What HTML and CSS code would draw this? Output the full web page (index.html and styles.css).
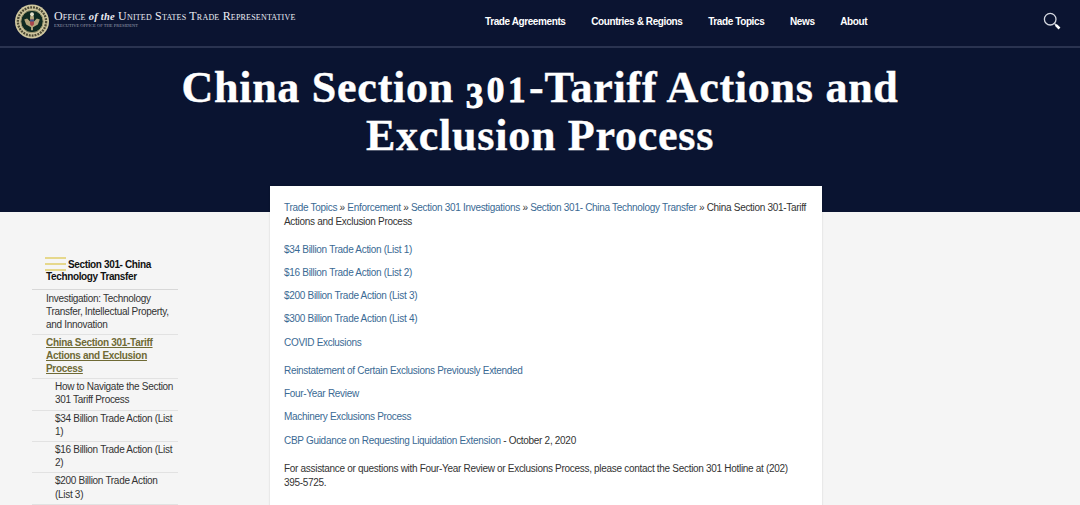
FILE: index.html
```html
<!DOCTYPE html>
<html lang="en">
<head>
  <meta charset="UTF-8">
  <title>China Section 301-Tariff Actions and Exclusion Process</title>
  <link rel="stylesheet" href="styles.css">
</head>
<body>
  <header class="topbar">
    <a class="brand" href="#">
      <svg class="seal" viewBox="0 0 36 36" width="36" height="35">
        <circle cx="18" cy="18" r="17.5" fill="#cfc79f"/>
        <circle cx="18" cy="18" r="14.500" fill="none" stroke="#4d4a35" stroke-width="2.400" stroke-dasharray="2 1"/>
        <circle cx="18" cy="18" r="11.500" fill="#0f2a22" stroke="#a89f76" stroke-width="1"/>
        <path d="M18 10l2 3v5l3-3 3 1-2 5-5 3v3h-2v-3l-5-3-2-5 3-1 3 3v-5z" fill="#b3a67c"/>
        <path d="M16 16h4v5l-2 2-2-2z" fill="#a8454a"/>
        <path d="M16 16h4v2h-4z" fill="#3d5686"/>
        <circle cx="18" cy="10.500" r="2" fill="#e4dfc8"/>
      </svg>
      <span class="brand-text">
        <span class="brand-name">Office <em>of the</em> United States Trade Representative</span>
        <span class="brand-sub">Executive Office of the President</span>
      </span>
    </a>
    <nav class="main-nav">
      <a href="#">Trade Agreements</a>
      <a href="#">Countries &amp; Regions</a>
      <a href="#">Trade Topics</a>
      <a href="#">News</a>
      <a href="#">About</a>
    </nav>
    <svg class="search" viewBox="0 0 18 18" width="18" height="18">
      <circle cx="7.200" cy="7.200" r="5.800" fill="none" stroke="#d5d8e0" stroke-width="1.300"/>
      <path d="M11.500 11.500l1.500 1.500" stroke="#d5d8e0" stroke-width="1.300"/>
      <path d="M12.800 12.800l3.700 3.700" stroke="#fff" stroke-width="2.600"/>
    </svg>
  </header>

  <section class="hero">
    <h1>China Section <span class="onum"><span class="drop">3</span>01</span>-Tariff Actions and Exclusion Process</h1>
  </section>

  <div class="page">
    <aside class="sidebar">
      <h2 class="side-title"><span class="burger"></span>Section 301- China Technology Transfer</h2>
      <ul class="side-menu">
        <li><a href="#">Investigation: Technology Transfer, Intellectual Property, and Innovation</a></li>
        <li class="current"><a href="#">China Section 301-Tariff Actions and Exclusion Process</a></li>
        <li class="sub"><a href="#">How to Navigate the Section 301 Tariff Process</a></li>
        <li class="sub"><a href="#">$34 Billion Trade Action (List 1)</a></li>
        <li class="sub"><a href="#">$16 Billion Trade Action (List 2)</a></li>
        <li class="sub"><a href="#">$200 Billion Trade Action (List 3)</a></li>
      </ul>
    </aside>

    <main class="content">
      <p class="crumbs"><a href="#">Trade Topics</a> » <a href="#">Enforcement</a> » <a href="#">Section 301 Investigations</a> » <a href="#">Section 301- China Technology Transfer</a> » China Section 301-Tariff Actions and Exclusion Process</p>
      <ul class="links">
        <li><a href="#">$34 Billion Trade Action (List 1)</a></li>
        <li><a href="#">$16 Billion Trade Action (List 2)</a></li>
        <li><a href="#">$200 Billion Trade Action (List 3)</a></li>
        <li><a href="#">$300 Billion Trade Action (List 4)</a></li>
        <li class="gap"><a href="#">COVID Exclusions</a></li>
        <li><a href="#">Reinstatement of Certain Exclusions Previously Extended</a></li>
        <li><a href="#">Four-Year Review</a></li>
        <li><a href="#">Machinery Exclusions Process</a></li>
        <li><a href="#">CBP Guidance on Requesting Liquidation Extension</a> - October 2, 2020</li>
      </ul>
      <p class="hotline">For assistance or questions with Four-Year Review or Exclusions Process, please contact the Section 301 Hotline at (202) <span class="phone">395-5725.</span></p>
    </main>
  </div>
</body>
</html>
```

FILE: styles.css
```css
html, body {
  margin: 0;
  height: 505px;
  overflow: hidden;
}
body {
  background: #f5f5f5;
  color: #333;
  font-family: "Liberation Sans", Arial, sans-serif;
  font-size: 10px;
  letter-spacing: -.3px;
}
a {
  text-decoration: none;
}
ul {
  margin: 0;
  padding: 0;
  list-style: none;
}

/* top bar */
.topbar {
  display: flex;
  align-items: center;
  box-sizing: border-box;
  height: 48px;
  padding: 0 19px 4px 14px;
  background: #0b1431;
  border-bottom: 2px solid #2a3350;
}
.brand {
  display: flex;
  align-items: center;
  gap: 4px;
  width: 471px;
}
.seal {
  flex: none;
}
.brand-text {
  display: flex;
  flex-direction: column;
  margin-top: -4px;
}
.brand-name {
  color: #eceef4;
  font-family: "Liberation Serif", serif;
  font-size: 12px;
  font-variant: small-caps;
  letter-spacing: .2px;
  white-space: nowrap;
  line-height: 13px;
}
.brand-name em {
  font-size: 10.500px;
  font-weight: bold;
  font-variant: normal;
}
.brand-sub {
  color: #9a9fb0;
  font-family: "Liberation Serif", serif;
  font-size: 4.500px;
  letter-spacing: 0;
  line-height: 6px;
  text-transform: uppercase;
  white-space: nowrap;
}
.main-nav {
  display: flex;
  gap: 25.700px;
  flex: 1;
}
.main-nav a {
  color: #fff;
  font-size: 10px;
  font-weight: bold;
  letter-spacing: -.4px;
}
.search {
  flex: none;
}

/* title */
.hero {
  height: 164px;
  background: #0a1431;
}
.hero h1 {
  width: 760px;
  margin: 0 auto;
  padding-top: 17px;
  color: #fff;
  font-family: "Liberation Serif", serif;
  font-size: 44px;
  font-weight: bold;
  line-height: 45px;
  letter-spacing: .75px;
  text-align: center;
  -webkit-text-stroke: .4px #fff;
}
/* old style figures, the font has none */
.onum {
  font-size: .8em;
  letter-spacing: 3.500px;
  -webkit-text-stroke: .9px #fff;
}
.drop {
  display: inline-block;
  transform: translateY(.17em);
}

/* columns */
.page {
  display: grid;
  grid-template-columns: 146px 552px;
  gap: 92px;
  padding-left: 32px;
}

/* side menu */
.sidebar {
  padding-top: 45px;
}
.side-title {
  margin: 0;
  padding: 0 0 6px 14px;
  border-bottom: 1px solid #d8d8d8;
  color: #111;
  font-size: 10px;
  letter-spacing: -.36px;
  line-height: 12px;
}
.burger {
  display: inline-block;
  box-sizing: border-box;
  width: 21px;
  height: 14px;
  margin: 0 2px -3px -1px;
  border-top: 2px solid #e6d88c;
  border-bottom: 2px solid #e6d88c;
  background: linear-gradient(#e6d88c, #e6d88c) center / 100% 2px no-repeat;
}
.side-menu li {
  padding: 1px 4px 3px 14px;
  border-bottom: 1px solid #e2e2e2;
  line-height: 13.200px;
}
.side-menu li:first-child {
  padding-top: 2px;
  padding-bottom: 2px;
}
.side-menu a {
  color: #333;
}
.side-menu .current a {
  color: #6f6a35;
  font-weight: bold;
  letter-spacing: -.3px;
  text-decoration: underline;
}
.side-menu .sub {
  padding-left: 23px;
}

/* main card */
.content {
  box-sizing: border-box;
  height: 400px;
  margin-top: -26px;
  padding: 15px 14px 0;
  background: #fff;
  box-shadow: 0 0 2px rgba(0, 0, 0, .15);
  line-height: 14px;
}
.content a {
  color: #3a6a94;
}
.crumbs {
  margin: 0 0 13.500px;
}
.links li {
  margin-bottom: 9.300px;
}
.links .gap {
  margin-bottom: 14px;
}
.hotline {
  margin: 14.500px 0 0;
}
.phone {
  white-space: nowrap;
}
```
